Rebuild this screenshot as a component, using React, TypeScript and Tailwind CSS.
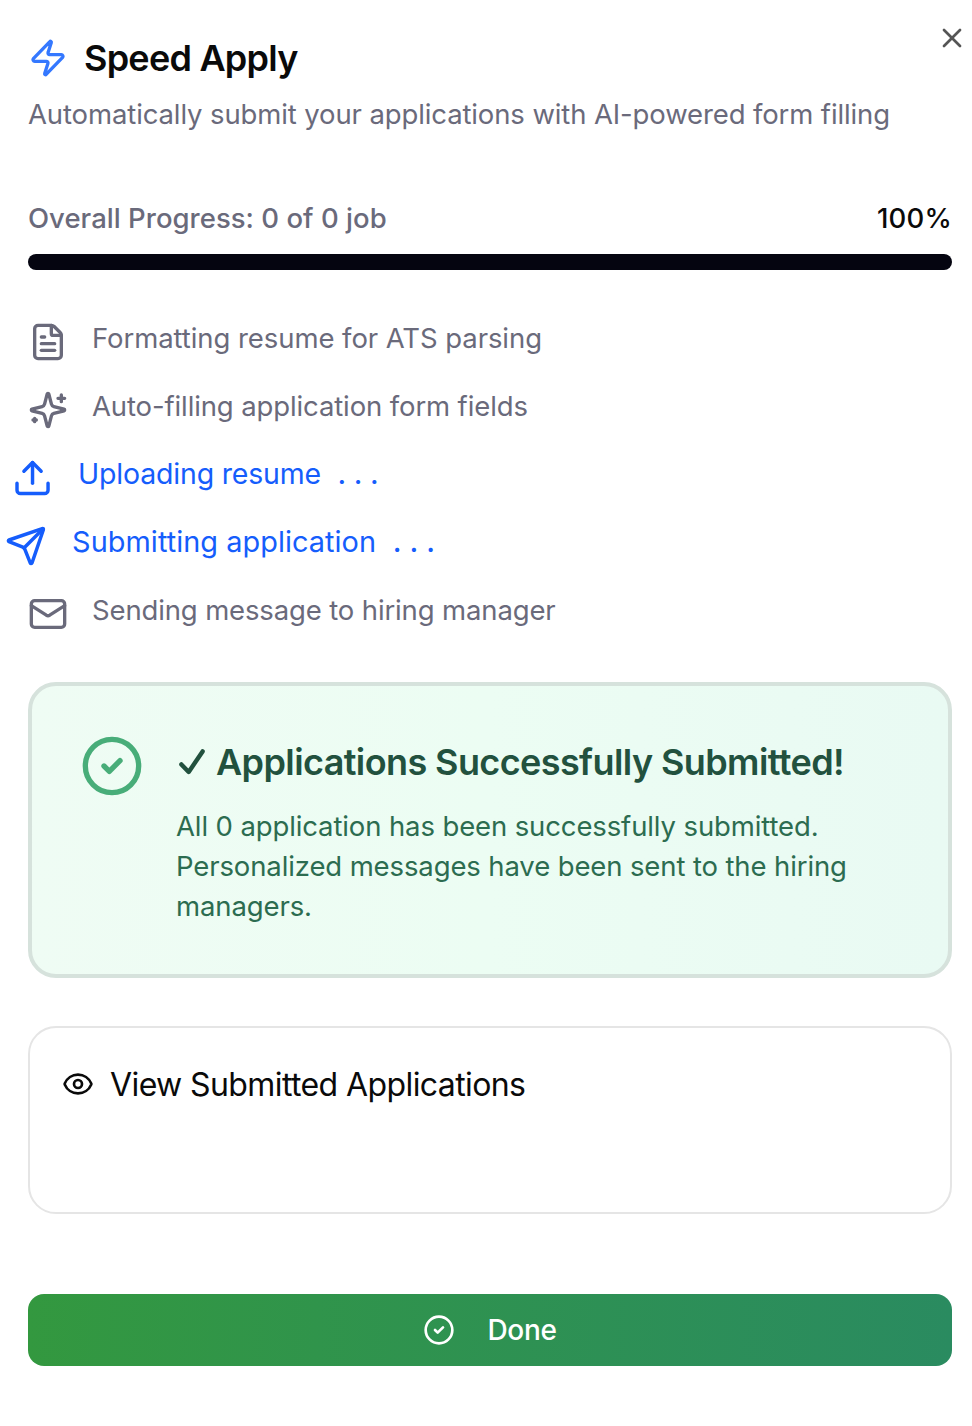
import type { ReactNode } from "react";
import { CircleCheck, Eye, FileText, Mail, Send, Upload, X, Zap } from "lucide-react";

function SparklesIcon() {
  return (
    <svg viewBox="0 0 24 24" className="size-10" fill="none" stroke="currentColor" strokeWidth="2" strokeLinecap="round" strokeLinejoin="round">
      <path d="M9.937 15.5A2 2 0 0 0 8.5 14.063l-6.135-1.582a.5.5 0 0 1 0-.962L8.5 9.936A2 2 0 0 0 9.937 8.5l1.582-6.135a.5.5 0 0 1 .963 0L14.063 8.5A2 2 0 0 0 15.5 9.937l6.135 1.581a.5.5 0 0 1 0 .964L15.5 14.063a2 2 0 0 0-1.437 1.437l-1.582 6.135a.5.5 0 0 1-.963 0z" />
      <path d="M20 3v4M22 5h-4M4 17v2M5 18H3" />
    </svg>
  );
}

function TickIcon() {
  return (
    <svg viewBox="0 0 30 28" className="h-7 w-[30px] shrink-0" fill="none" stroke="currentColor" strokeWidth="4.4" strokeLinecap="round" strokeLinejoin="round">
      <path d="M5.4 16.4 L12.7 24 L26.6 3.4" />
    </svg>
  );
}

function Step({ icon, className, children }: { icon: ReactNode; className: string; children: ReactNode }) {
  return (
    <li className={`flex h-11 items-start gap-6 ${className}`}>
      <span className="mt-1 shrink-0">{icon}</span>
      <span className="flex text-[27.5px] leading-[41px] whitespace-nowrap">{children}</span>
    </li>
  );
}

function Dots() {
  return (
    <span className="ml-4 flex gap-[7.5px] font-medium">
      <span>.</span>
      <span>.</span>
      <span>.</span>
    </span>
  );
}

export default function App() {
  return (
    <main className="relative h-[1426px] w-[972px] overflow-hidden bg-white pr-5 pl-7 font-['Inter',sans-serif] text-[#0a0a0a]">
      <button aria-label="Close" className="absolute top-[22px] left-[936px] text-[#555555]">
        <X className="size-8" />
      </button>

      <header className="pt-[38px]">
        <h1 className="flex h-10 items-center gap-4 text-[36px] font-semibold tracking-[-0.76px]">
          <Zap className="size-10 text-[#3478ff]" />
          <span>Speed Apply</span>
        </h1>
        <p className="mt-4 text-[27.5px] leading-[41px] tracking-[-0.12px] whitespace-nowrap text-[#6a6a7b]">
          Automatically submit your applications with AI-powered form filling
        </p>
      </header>

      <section className="mt-[63px]">
        <div className="flex h-10 justify-between text-[27.5px] leading-[41px] font-medium whitespace-nowrap">
          <span className="tracking-[0.03px] text-[#6a6a7b]">Overall Progress: 0 of 0 job</span>
          <span className="tracking-[0.2px]">100%</span>
        </div>
        <div className="mt-4 h-4 rounded-full bg-[#050510]" />
      </section>

      <ul className="mt-12 flex flex-col gap-6 text-[#6a6a7b]">
        <Step icon={<FileText className="size-10" />} className="tracking-[-0.07px]">Formatting resume for ATS parsing</Step>
        <Step icon={<SparklesIcon />} className="tracking-[-0.12px]">Auto-filling application form fields</Step>
        <Step icon={<Upload className="size-10" />} className="scale-[1.035] tracking-[-0.17px] text-[#155dfc]">
          Uploading resume
          <Dots />
        </Step>
        <Step icon={<Send className="size-10" />} className="scale-[1.05] tracking-[0.04px] text-[#155dfc]">
          Submitting application
          <Dots />
        </Step>
        <Step icon={<Mail className="size-10" />} className="tracking-[-0.14px]">Sending message to hiring manager</Step>
      </ul>

      <section className="mt-12 flex h-[296px] gap-8 rounded-[28px] border-4 border-[#d6e2dc] bg-linear-to-r from-[#effcf4] via-[#ecfdf3] to-[#e9faf3] px-12 pt-12">
        <CircleCheck className="size-16 shrink-0 text-[#48ad79]" />
        <div className="whitespace-nowrap">
          <h2 className="flex h-14 items-center gap-2.5 text-[36px] leading-[56px] font-semibold tracking-[-0.6px] text-[#22513e]">
            <TickIcon />
            <span>Applications Successfully Submitted!</span>
          </h2>
          <p className="mt-4 text-[27.5px] leading-10 tracking-[-0.12px] text-[#2c6c50]">
            All 0 application has been successfully submitted.
            <br />
            Personalized messages have been sent to the hiring
            <br />
            managers.
          </p>
        </div>
      </section>

      <section className="mt-12 h-[188px] rounded-[28px] border-2 border-[#e5e5e5] px-8 pt-10">
        <h3 className="flex h-8 items-center gap-4 text-[32px] leading-8 tracking-[-0.6px]">
          <Eye className="size-8" />
          <span className="pt-0.5">View Submitted Applications</span>
        </h3>
      </section>

      <button className="mt-20 flex h-[72px] w-full items-center justify-center gap-8 rounded-2xl bg-linear-to-r from-[#33983f] to-[#2a8b60] text-[28px] font-medium tracking-[-0.3px] text-white">
        <CircleCheck className="size-8" />
        <span>Done</span>
      </button>
    </main>
  );
}
